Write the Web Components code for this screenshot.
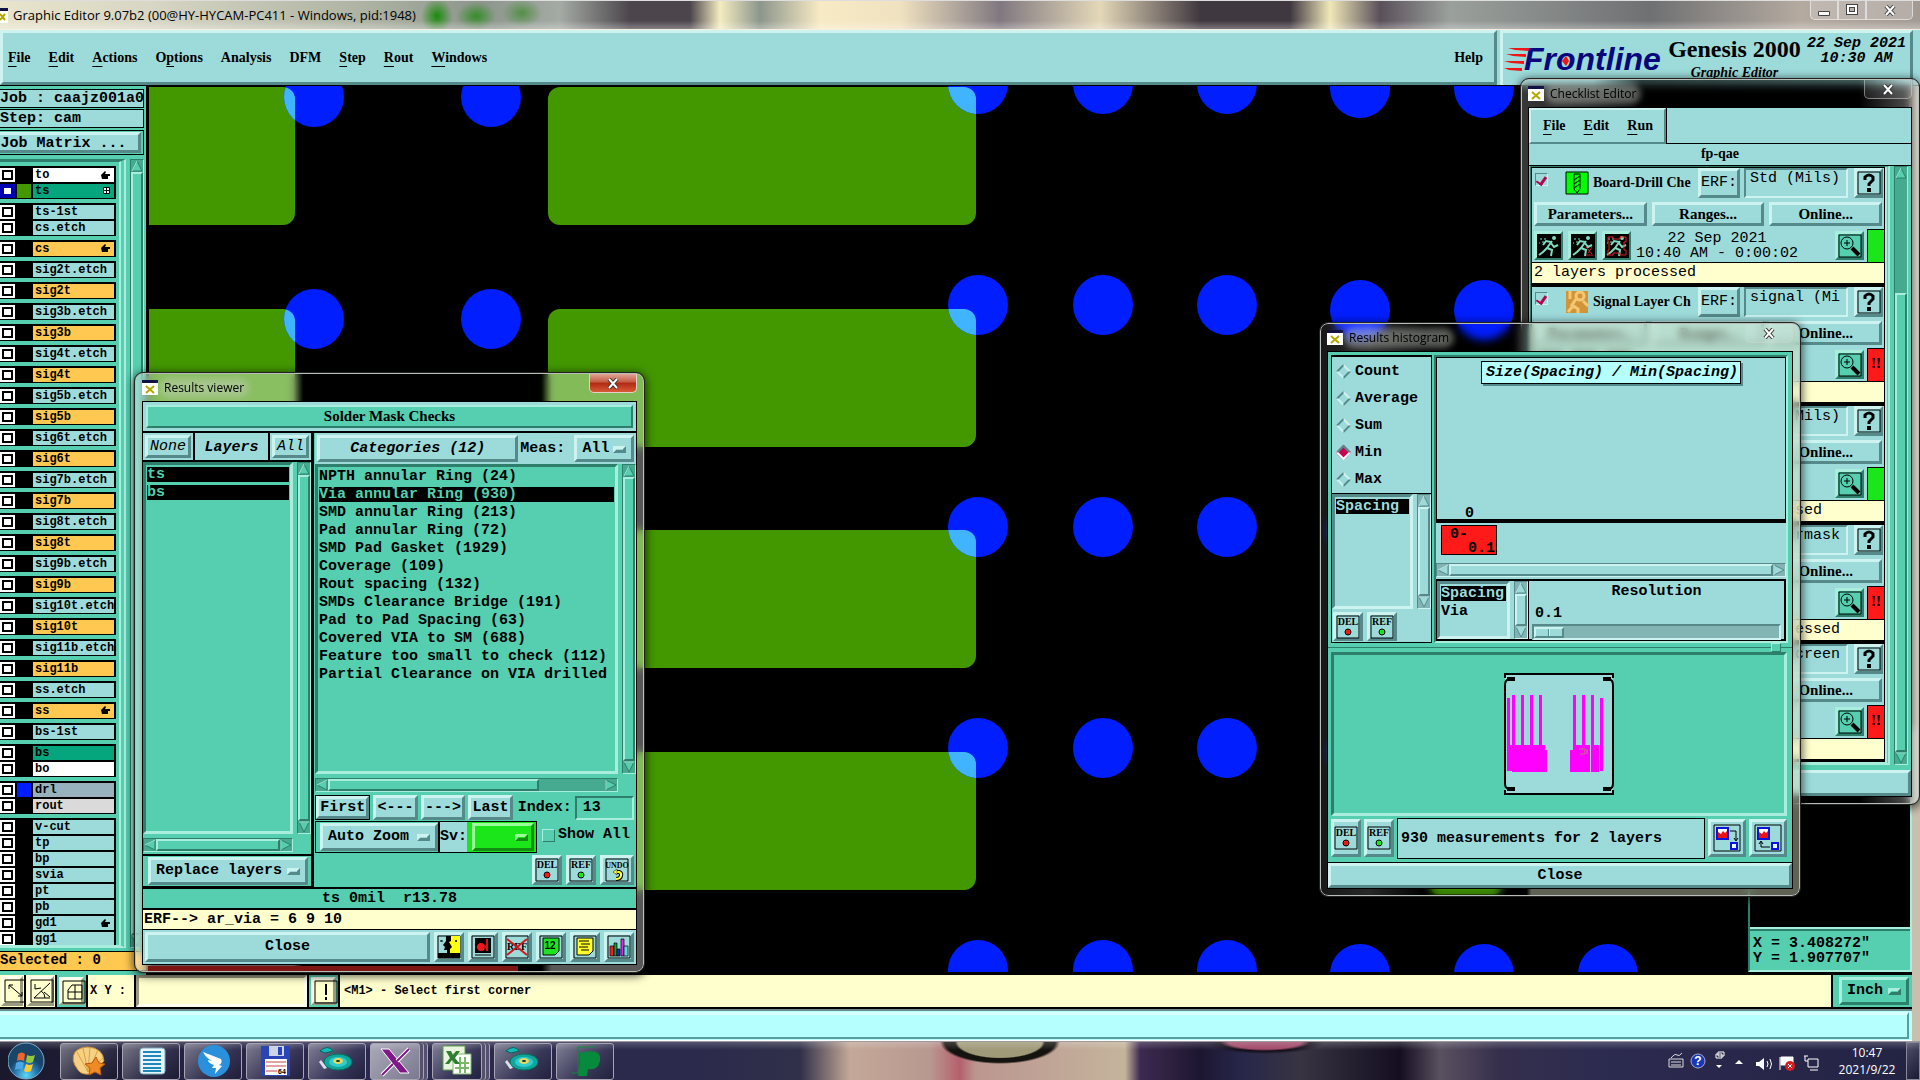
<!DOCTYPE html>
<html lang="en">
<head>
<meta charset="utf-8">
<title>Graphic Editor</title>
<style>
  html, body { margin: 0; height: 100%; }
  body {
    --light: #9ddbdb;
    --light-hi: #cdf3f1;
    --light-lo: #56898a;
    --green: #55cfb0;
    --green-hi: #a9eedd;
    --green-lo: #2d7f6b;
    --cream: #ffffce;
    --mono: "Liberation Mono", "DejaVu Sans Mono", monospace;
    --serif: "Liberation Serif", serif;
    --sans: "Open Sans", "Noto Sans", sans-serif;
    --face: var(--green);
    --hi: var(--green-hi);
    --lo: var(--green-lo);
    background: #000;
    color: #000;
    font: bold 15px/18px var(--mono);
    overflow: hidden;
  }
</style>
</head>
<body>
<genesis-desktop></genesis-desktop>

<script>
const base = `
  *, :host { box-sizing: border-box; }
  :host { display: block; }
  button, input, select { font: inherit; color: inherit; margin: 0; padding: 0; border-radius: 0; outline: none; }
  button { white-space: nowrap; }
  input { min-width: 0; }
  .lt { --face: var(--light); --hi: var(--light-hi); --lo: var(--light-lo); background: var(--light); }
  .raised { background: var(--face); border: 3px solid; border-color: var(--hi) var(--lo) var(--lo) var(--hi); }
  .sunken { background: var(--face); border: 3px solid; border-color: var(--lo) var(--hi) var(--hi) var(--lo); }
  .row { display: flex; }
  .col { display: flex; flex-direction: column; }
  .grow { flex: 1; min-width: 0; min-height: 0; }
`;

// registers an element whose shadow markup comes from render(element)
function define(name, css, render) {
  customElements.define(name, class extends HTMLElement {
    constructor() {
      super();
      this.attachShadow({ mode: 'open' });
    }

    connectedCallback() {
      const template = document.createElement('template');
      template.innerHTML = `<style>${base}${css}</style>${render(this)}`;
      this.shadowRoot.replaceChildren(template.content.cloneNode(true));
    }
  });
}

const man = '<rect width="24" height="24" fill="#000"/><g stroke="#7fdcc0" stroke-width="2" fill="none"><path d="M15 7l-5 7M10 14l5 2-1 6M10 14l-4 4-4 3M14 8l-5-1-3 4M14 9l3 4 4-2"/></g><circle cx="17" cy="4" r="2" fill="#7fdcc0"/><path d="M3 5h2M7 5h2M5 8h2M2 9h1" stroke="#7fdcc0" stroke-width="1"/>';
const frame = '<path d="M1 1h22v22H1z" fill="none" stroke="#000"/>';
const small = (label, extra) => `${frame}<text x="12" y="10" text-anchor="middle" style="font:bold 10px 'Liberation Serif',serif">${label}</text>${extra}`;

const icons = {
  del: small('DEL', '<circle cx="12" cy="17" r="3" fill="#f01818" stroke="#000"/>'),
  ref: small('REF', '<circle cx="12" cy="17" r="3" fill="#1ee41e" stroke="#000"/>'),
  undo: frame + '<text x="12" y="10" text-anchor="middle" style="font:bold 8px \'Liberation Serif\',serif">UNDO</text><path d="M10 14h4q3 1 2 4t-5 3" fill="none" stroke="#000" stroke-width="4"/><path d="M9 14h5q3 1 2 4t-5 3" fill="none" stroke="#ff3" stroke-width="2"/><path d="M12 11l-4 3 4 3z" fill="#ff3" stroke="#000" stroke-width=".5"/>',
  faces: '<path d="M1 1h22v22H1z" fill="#9ddbdb" stroke="#000"/><path d="M12 1h11v17H12z" fill="#ff1"/><path d="M9 1h5v5l-2 1 3 5-2 2v4h10v5H1v-5h9v-3H7l1-3-2-2 3-4z"/><path d="M4 6h2M18 6h2M4 5v2M19 5v2" stroke="#000"/>',
  screen: frame + '<rect x="4" y="3" width="16" height="15"/><circle cx="10" cy="12" r="4" fill="#f01818"/><path d="M16 4v12M12 12h4" stroke="#d01818" stroke-width="2"/><path d="M4 20h16" stroke="#000" stroke-width="1"/>',
  noref: frame + '<text x="12" y="15" text-anchor="middle" style="font:bold 10px \'Liberation Serif\',serif">REF</text><path d="M2 4l20 16M22 4L2 20" stroke="#d01818" stroke-width="2"/>',
  half: frame + '<path d="M4 3h16v13l-4 4H4z" fill="#1ee41e" stroke="#000"/><text x="11" y="14" text-anchor="middle" style="font:bold 10px \'Liberation Sans\',sans-serif">12</text>',
  note: frame + '<path d="M4 3h16v13l-4 4H4z" fill="#ffff2a" stroke="#000"/><path d="M6 6h10M8 9h9M6 12h9M8 15h8" stroke="#000"/>',
  bars: frame + '<g stroke="#000" stroke-width=".7"><path d="M3 11h4v10H3z" fill="#e22"/><path d="M7 8h3v13H7z" fill="#194"/><path d="M10 14h3v7h-3z" fill="#22c"/><path d="M14 4h3v17h-3z" fill="#e2e"/><path d="M17 11h4v10h-4z" fill="#5dd"/></g>',
  help: frame + '<path d="M8 9V6q4-4 8 0v3l-4 4v2" fill="none" stroke="#000" stroke-width="3"/><path d="M10 17h4v4h-4z"/>',
  zoom: frame + '<circle cx="9" cy="9" r="6" fill="none" stroke="#000"/><path d="M6 9h6M9 6v6" stroke="#000"/><path d="M14 14l7 7" stroke="#000" stroke-width="4"/>',
  run: man,
  runSel: man + '<path d="M15 13l6 7M21 13l-4 6M15 21h7" stroke="#c22" stroke-width="1"/>',
  runBox: man + '<path d="M3 3h5v2h7V3h6v5h-2v8h2v5h-6v-2H8v2H3v-5h1V8H3z" fill="none" stroke="#d22"/>',
  drill: '<path d="M1 1h22v22H1z" fill="#0f0" stroke="#000"/><path d="M9 3h6v15l-3 4-3-4zM9 9l6-4M9 13l6-4M9 17l6-4" fill="none" stroke="#000"/>',
  signal: '<rect x="1" y="1" width="22" height="22" fill="#d29438"/><circle cx="15" cy="6" r="4" fill="none" stroke="#f4c774" stroke-width="3"/><path d="M5 1v8M11 9l-4 6 6 4v4M3 22l4-5h4M18 11l5 5" fill="none" stroke="#f4c774" stroke-width="3"/>',
  line: frame + '<path d="M5 6l13 11M5 10V6h4M14 17h4v-4" fill="none" stroke="#000"/>',
  angle: frame + '<path d="M4 19L20 4M4 19h16M5 5v5l6-1M11 12q4 2 4 7M14 13l6 5" fill="none" stroke="#000"/>',
  grid: frame + '<path d="M6 10l4-5h10v14H6zM13 5v14M6 12h14" fill="none" stroke="#000"/>',
  alert: frame + '<path d="M12 4v11M12 17v3" stroke="#000" stroke-width="2"/>',
  stackOut: '<path d="M1 1h26v26H1z" fill="none" stroke="#000"/><path d="M4 4h11v11H4z" fill="#fff" stroke="#11d" stroke-width="2"/><path d="M5 8l3 2 2-3 2 2 2-2v7H5z" fill="#e11"/><path d="M18 19h6v6h-6z" fill="#dff" stroke="#11d" stroke-width="2"/><path d="M17 7h6v9M21 14l2 3 2-3" fill="none" stroke="#000"/>',
  stackIn: '<path d="M1 1h26v26H1z" fill="none" stroke="#000"/><path d="M4 4h11v11H4z" fill="#fff" stroke="#11d" stroke-width="2"/><path d="M5 8l3 2 2-3 2 2 2-2v7H5z" fill="#e11"/><path d="M18 19h6v6h-6z" fill="#dff" stroke="#11d" stroke-width="2"/><path d="M16 23H7v-5M5 20l2-3 2 3" fill="none" stroke="#000"/>'
};

// every icon is kept on a 24px grid, the stack icons on 28px
define('glyph-icon', 'svg { display: block; }', el => {
  const name = el.getAttribute('name');
  const size = name.startsWith('stack') ? 28 : 24;
  return `<svg width="${size}" height="${size}" viewBox="0 0 ${size} ${size}">${icons[name]}</svg>`;
});

define('icon-button', `
  button { width: 100%; height: 100%; display: grid; place-items: center; }
`, el => `<button type="button" class="raised" aria-label="${el.getAttribute('label')}"><glyph-icon name="${el.getAttribute('name')}"></glyph-icon></button>`);

define('motif-button', `
  button { width: 100%; height: 100%; overflow: hidden; }
`, () => '<button type="button" class="raised"><slot></slot></button>');

// drop-down with the small raised bar of a Motif option menu
define('option-menu', `
  :host { position: relative; }
  select { appearance: none; width: 100%; height: 100%; padding-left: 5px; }
  i { position: absolute; right: 8px; top: 50%; width: 13px; height: 7px; margin-top: -3px; border-width: 2px; pointer-events: none; }
`, el => `<select class="raised" aria-label="${el.getAttribute('label')}"><option>${el.getAttribute('value')}</option></select><i class="raised"></i>`);

define('scroll-bar', `
  :host { flex: none; display: flex; background: color-mix(in srgb, var(--face) 82%, #000); border: 1px solid; border-color: var(--lo) var(--hi) var(--hi) var(--lo); }
  :host([dir=v]) { flex-direction: column; width: 14px; }
  :host([dir=h]) { height: 14px; }
  .track { flex: 1; display: flex; flex-direction: inherit; }
  .thumb { border-width: 2px; }
  svg { flex: none; display: block; width: 12px; height: 12px; stroke: var(--lo); fill: var(--face); }
`, el => {
  const v = el.getAttribute('dir') === 'v';
  const start = Number(el.getAttribute('start') || 0);
  const size = Number(el.getAttribute('size') || 100);
  const a = v ? 'M6 1L11 11H1z' : 'M1 6L11 1v10z';
  const b = v ? 'M6 11L11 1H1z' : 'M11 6L1 1v10z';
  const hiA = v ? 'M6 1L1 11' : 'M1 6L11 1';
  const hiB = v ? 'M1 1h10' : 'M1 1v10';
  return `<svg><path d="${a}"/><path d="${hiA}" style="stroke:var(--hi)"/></svg>
    <div class="track"><div style="flex:${start}"></div><div class="thumb raised" style="flex:${size}"></div><div style="flex:${100 - start - size}"></div></div>
    <svg><path d="${b}"/><path d="${hiB}" style="stroke:var(--hi)"/></svg>`;
});

define('text-list', `
  :host { display: flex; gap: 4px; min-height: 0; }
  .box { flex: 1; min-width: 0; padding: 2px 1px; overflow: hidden; }
  ::slotted(div) { height: 15px; line-height: 15px; margin-bottom: 3px; white-space: pre; overflow: hidden; }
  ::slotted(div[selected]) { background: #000; color: var(--face); }
`, () => '<div class="box sunken"><slot></slot></div><scroll-bar dir="v"></scroll-bar>');

define('aero-window', `
  :host { position: absolute; display: flex; flex-direction: column; border: 1px solid #b8beb8; outline: 1px solid #222; border-radius: 8px; padding: 0 6px 6px; background: var(--glass, #0003); backdrop-filter: blur(4px); box-shadow: 0 2px 10px 2px #000a; }
  header { flex: none; height: 27px; display: flex; align-items: center; gap: 6px; font: 12px/16px var(--sans); }
  h2 { margin: 0; font: inherit; line-height: 10px; background: #c8d0c470; border-radius: 5px; box-shadow: 0 0 6px 5px #c8d0c470; }
  .x { align-self: flex-start; margin-left: auto; width: 48px; height: 19px; display: grid; place-items: center; background: #ffffff18; border: 1px solid #ccd4cc88; border-top: 0; border-radius: 0 0 5px 5px; }
  :host([active]) .x { background: linear-gradient(#e0a595, #c55a42 45%, #b02a10 50%, #d8593a); border-color: #e6cfc8; }
  .body { flex: 1; min-height: 0; border: 1px solid #000; background: var(--green); display: flex; flex-direction: column; }
`, el => `<header>
    <svg width="16" height="15"><path d="M0 0h16v15H0z" fill="#fff"/><path d="M0 0h16v3H0z" fill="#114"/><path d="M4 6l8 7M12 6l-8 7" stroke="#b5a800" stroke-width="2"/></svg>
    <h2>${el.getAttribute('heading')}</h2>
    <button class="x" type="button" aria-label="Close window"><svg width="12" height="11"><path d="M2 1l8 9M10 1L2 10" stroke="#333" stroke-width="4"/><path d="M2 1l8 9M10 1L2 10" stroke="#fff" stroke-width="2"/></svg></button>
  </header><div class="body"><slot></slot></div>`);

define('menu-items', `
  :host { display: flex; gap: 18px; font: bold 14px/18px var(--serif); }
  a { color: inherit; text-decoration: none; white-space: nowrap; }
  u { text-underline-offset: 4px; }
`, el => el.getAttribute('items').split(',').map(item => `<a href="#">${item.replace(/_(.)/, '<u>$1</u>')}</a>`).join(''));

// colour codes: n normal, o orange, w white, g green, d drill, r rout; the third entry is the mark
const layers = [
  [['to', 'w', 'h'], ['ts', 'g', 'a']],
  [['ts-1st'], ['cs.etch']],
  [['cs', 'o', 'h']],
  ...['2t', '3b', '4t', '5b', '6t', '7b', '8t', '9b', '10t', '11b'].flatMap(s => [[[`sig${s}.etch`]], [[`sig${s}`, 'o']]]),
  [['ss.etch']],
  [['ss', 'o', 'h']],
  [['bs-1st']],
  [['bs', 'g'], ['bo', 'w']],
  [['drl', 'd'], ['rout', 'r']],
  [['v-cut'], ['tp'], ['bp'], ['svia'], ['pt'], ['pb'], ['gd1', 'n', 'h'], ['gg1']]
];

define('layer-panel', `
  :host { display: flex; flex-direction: column; background: var(--green); border-right: 3px solid #000; padding-top: 3px; overflow: hidden; }
  .cell { height: 19px; margin-right: 2px; border: 1px solid #000; border-left: 0; line-height: 17px; white-space: pre; background: var(--light); }
  .cell + .cell { margin-top: 1px; }
  .matrix { height: 25px; margin: 2px 2px 4px 0; padding: 1px 2px 1px 0; border: 1px solid #000; border-left: 0; }
  .matrix motif-button { height: 21px; margin-left: -14px; }
  .lists { display: flex; padding-right: 2px; gap: 4px; }
  .rows { flex: 1; padding-top: 4px; overflow: hidden; border: solid var(--lo); border-width: 3px 0 0; border-right: 7px double var(--hi); border-bottom: 3px solid var(--hi); font: bold 12px/14px var(--mono); }
  .group { background: #000; width: 116px; margin-bottom: 4px; padding: 1px 0; }
  .layer { height: 16px; display: flex; align-items: center; gap: 2px; }
  .layer:last-child { height: 15px; }
  input { appearance: none; flex: none; width: 15px; height: 14px; background: #fff; display: grid; place-items: center; }
  input::after { content: ""; box-sizing: border-box; width: 11px; height: 10px; border: 2px solid #000; background: #fff; }
  input:checked { background: #0000b4; }
  input:checked::after { border-color: #0000b4; }
  .swatch { width: 14px; height: 14px; }
  label { width: 81px; height: 14px; padding: 0 4px 0 2px; display: flex; justify-content: space-between; align-items: center; background: var(--light); }
  .o { background: #ffc850; } .w { background: #fff; } .g { background: #05a57d; } .d { background: #98b2bd; } .r { background: #dadada; }
  .selected { height: 20px; margin: 3px 0 4px; border: solid #000; border-width: 1px 0; background: #ffc850; font: bold 14px/17px var(--mono); }
`, () => `
  <div class="cell">Job : caajz001a0</div>
  <div class="cell">Step: cam</div>
  <div class="matrix"><motif-button class="lt">Job Matrix ...</motif-button></div>
  <div class="lists grow">
    <div class="rows">${layers.map(group => `<div class="group">${group.map(([name, kind = 'n', mark]) => `
      <div class="layer"><input type="checkbox" id="l-${name}" ${mark === 'a' ? 'checked' : ''}>
      <span class="swatch" style="background:${mark === 'a' ? '#439800' : kind === 'd' ? '#001eff' : '#000'}"></span>
      <label for="l-${name}" class="${kind}">${name}${mark === 'h' ? '<svg width="9" height="9"><path d="M0 4l4-4 1 1-1 2h5v2H7v3H1z"/></svg>' : mark ? '<svg width="7" height="7"><path d="M.5.5h6v6h-6zM3.5 0v7M0 3.5h7" fill="#fff" stroke="#000"/></svg>' : ''}</label></div>`).join('')}</div>`).join('')}
    </div>
    <scroll-bar dir="v"></scroll-bar>
  </div>
  <div class="selected">Selected : 0</div>`);

// pads and solder mask openings, in screen pixels from the window corner
define('board-canvas', `
  :host { position: relative; background: #000; overflow: hidden; border-bottom: 3px solid #000; }
  svg { display: block; width: 100%; height: 100%; }
  .corner { position: absolute; right: 0; bottom: 0; width: 164px; border: 2px solid; border-color: #000 var(--green-hi) var(--green-hi) var(--green-lo); }
  .view { height: 200px; border-bottom: 2px solid var(--green-hi); }
  .xy { background: var(--green); border-top: 2px solid var(--green-lo); padding: 5px 3px 4px; font: bold 15px/15px var(--mono); white-space: pre; }
`, () => {
  const pads = [[1608, 974]];
  [97, 319, 540, 762].forEach(y => [314, 491].forEach(x => pads.push([x, y])));
  [84, 305, 527, 748, 970].forEach(y => [978, 1103, 1227].forEach(x => pads.push([x, y])));
  [88, 310, 531, 753, 974].forEach(y => [1360, 1484].forEach(x => pads.push([x, y])));
  const circles = pads.map(([x, y]) => `<circle cx="${x}" cy="${y}" r="30"/>`).join('');
  const bars = [87, 309, 530, 752].map(y => `<rect x="120" y="${y}" width="175" height="138" rx="12"/><rect x="548" y="${y}" width="428" height="138" rx="12"/>`).join('');
  return `<svg><defs><clipPath id="mask">${bars}</clipPath></defs><g transform="translate(-149 -86)">
      <g fill="#439800">${bars}</g><g fill="#001eff">${circles}</g><g fill="#40b4ff" clip-path="url(#mask)">${circles}</g>
      <rect x="1430" y="870" width="72" height="24" rx="8" fill="#439800"/>
    </g></svg>
    <div class="corner"><div class="view"></div><div class="xy">X = 3.408272"
Y = 1.907707"</div></div>`;
});

define('results-viewer', `
  aero-window { left: 135px; top: 373px; width: 509px; height: 599px; --glass: linear-gradient(#7d1612, #7d1612) 12px 100% / 370px 5px no-repeat, linear-gradient(90deg, #ffffff60 0, #ffffff60 31%, #0000 33%, #0000 80%, #ffffff58 82%); }
  .head { height: 29px; border: 3px solid var(--light); box-shadow: 0 2px #000; margin-bottom: 2px; text-align: center; font: bold 15px/18px var(--serif); }
  .head div { height: 23px; border-width: 2px; }
  .panes { display: flex; }
  .left { width: 171px; border-right: 3px solid #000; }
  .tabs { height: 29px; display: flex; border-bottom: 2px solid #000; }
  .tabs > * { padding: 2px; }
  .tabs b { flex: 1; background: var(--light); border: solid #000; border-width: 0 2px; text-align: center; line-height: 25px; font-style: italic; }
  .tabs i { font-weight: normal; }
  motif-button, option-menu, icon-button { height: 100%; }
  .right { padding-left: 1px; }
  .cat { height: 31px; display: flex; align-items: center; background: var(--light); white-space: pre; }
  .nav { display: flex; gap: 3px; height: 26px; align-items: center; padding: 1px 2px 0 0; }
  .nav motif-button { width: 45px; }
  .nav .first { width: 56px; border: 1px solid #000; }
  .nav label { margin-left: 2px; }
  .nav input { width: 60px; height: 24px; margin-left: auto; padding-left: 6px; border-width: 2px; }
  .opts { display: flex; height: 34px; align-items: center; padding: 1px 0; white-space: nowrap; }
  .opts .box { height: 32px; border: 1px solid #000; display: flex; align-items: center; }
  .zoom { width: 118px; height: 28px; margin-left: 4px; }
  .opts .sv { --face: #1ae61a; --hi: #9f9; --lo: #128c12; background: #1ae61a; height: 30px; padding: 1px 2px 1px 5px; width: 69px; }
  .opts label { display: flex; align-items: center; gap: 3px; margin-left: 5px; padding-bottom: 4px; }
  .opts label input { appearance: none; width: 13px; height: 13px; border-width: 1px; }
  .icons { display: flex; gap: 4px; height: 33px; justify-content: flex-end; padding: 1px 2px 2px; }
  .icons icon-button { width: 30px; }
  .icons .wide { width: 34px; }
  .line { height: 21px; border-top: 2px solid #000; text-align: center; white-space: pre; line-height: 19px; }
  .erf { background: var(--cream); text-align: left; padding-left: 1px; }
  .foot { height: 35px; display: flex; gap: 4px; padding: 2px; border-top: 1px solid #000; }
  .foot icon-button { width: 30px; }
`, () => `<aero-window heading="Results viewer" active>
    <div class="head"><div class="raised">Solder Mask Checks</div></div>
    <div class="panes grow">
      <div class="left col">
        <div class="tabs"><motif-button class="lt" style="width:50px"><i>None</i></motif-button><b>Layers</b><motif-button class="lt" style="width:41px"><i>All</i></motif-button></div>
        <text-list class="grow"><div selected>ts</div><div selected>bs</div></text-list>
        <div style="padding:4px 18px 2px 0"><scroll-bar dir="h"></scroll-bar></div>
        <div style="height:33px;border-top:2px solid #000;border-bottom:1px solid #000;padding:1px 3px 1px 5px"><option-menu class="lt" label="Layer mode" value="Replace layers"></option-menu></div>
      </div>
      <div class="right col grow">
        <div class="cat"><motif-button class="lt" style="width:210px;padding:2px"><i>Categories (12)</i></motif-button><label>Meas: </label><option-menu class="lt" label="Meas" value="All" style="width:61px;margin:0 2px 0 auto;padding:2px 0"></option-menu></div>
        <text-list class="grow"><div>NPTH annular Ring (24)</div><div selected>Via annular Ring (930)</div><div>SMD annular Ring (213)</div><div>Pad annular Ring (72)</div><div>SMD Pad Gasket (1929)</div><div>Coverage (109)</div><div>Rout spacing (132)</div><div>SMDs Clearance Bridge (191)</div><div>Pad to Pad Spacing (63)</div><div>Covered VIA to SM (688)</div><div>Feature too small to check (112)</div><div>Partial Clearance on VIA drilled</div></text-list>
        <div style="padding:4px 18px 2px 0"><scroll-bar dir="h" size="76"></scroll-bar></div>
        <div class="nav"><motif-button class="lt first">First</motif-button><motif-button class="lt">&lt;---</motif-button><motif-button class="lt">---&gt;</motif-button><motif-button class="lt">Last</motif-button><label for="index">Index:</label><input id="index" class="sunken" value="13"></div>
        <div class="opts"><div class="box"><option-menu class="lt zoom" label="Zoom mode" value="Auto Zoom"></option-menu></div><div class="box"><span class="lt" style="line-height:30px">Sv:</span><option-menu class="sv" label="Severity" value=""></option-menu></div><label><input type="checkbox" class="raised">Show All</label></div>
        <div class="icons"><icon-button class="lt" name="del" label="Delete"></icon-button><icon-button class="lt" name="ref" label="Reference"></icon-button><icon-button class="lt wide" name="undo" label="Undo"></icon-button></div>
      </div>
    </div>
    <div class="line">ts 0mil  r13.78</div>
    <div class="line erf">ERF--&gt; ar_via = 6 9 10</div>
    <div class="foot lt"><motif-button class="grow">Close</motif-button>${['faces', 'screen', 'noref', 'half', 'note', 'bars'].map(n => `<icon-button name="${n}" label="${n}"></icon-button>`).join('')}</div>
  </aero-window>`);

define('checklist-item', `
  :host { --face: var(--light); --hi: var(--light-hi); --lo: var(--light-lo); background: var(--light); height: 119px; border: 1px solid #000; border-bottom-width: 3px; }
  .top { display: flex; height: 31px; padding: 0 1px 1px 3px; align-items: center; gap: 4px; }
  .tick { appearance: none; flex: none; width: 13px; height: 13px; align-self: flex-start; margin: 5px 13px 0 0; border-width: 1px; }
  .tick:checked { display: grid; place-items: center; }
  .tick:checked::after { content: ""; width: 4px; height: 8px; border: solid #b8004c; border-width: 0 3px 2px 0; transform: rotate(35deg); }
  .name { width: 101px; overflow: hidden; white-space: nowrap; font: bold 14px/20px var(--serif); }
  .erf { width: 42px; height: 30px; font-weight: normal; }
  .top input[type=text] { width: 104px; height: 30px; padding: 0 0 9px 4px; border-width: 2px; font-weight: normal; }
  .top icon-button { width: 29px; height: 30px; margin-left: auto; }
  .mid { display: flex; gap: 5px; height: 24px; margin: 3px 2px; font: bold 15px/18px var(--serif); }
  .mid motif-button { flex: 1; }
  .bot { display: flex; height: 33px; gap: 5px; align-items: center; padding-left: 2px; }
  .bot icon-button { width: 29px; height: 29px; --face: var(--green); --hi: var(--green-hi); --lo: var(--green-lo); }
  .date { width: 162px; margin-right: auto; text-align: center; font: 15px/15px var(--mono); white-space: pre; }
  .state { width: 17px; height: 33px; margin-left: -2px; border: 1px solid #000; border-width: 1px 0 0 1px; font: bold 15px/28px var(--serif); text-align: center; }
  .msg { height: 21px; border-top: 1px solid #000; background: var(--cream); font-weight: normal; padding-left: 2px; white-space: pre; line-height: 19px; }
`, el => {
  const a = name => el.getAttribute(name) || '';
  return `<div class="top"><input type="checkbox" class="tick sunken" checked aria-label="Enabled">
      ${a('icon') ? `<glyph-icon name="${a('icon')}"></glyph-icon>` : '<span style="width:24px"></span>'}
      <div class="name">${a('name')}</div><motif-button class="erf">ERF:</motif-button>
      <input type="text" class="sunken" aria-label="ERF model" value="${a('erf')}"><icon-button name="help" label="Help"></icon-button></div>
    <div class="mid"><motif-button>Parameters...</motif-button><motif-button>Ranges...</motif-button><motif-button>Online...</motif-button></div>
    <div class="bot"><icon-button name="run" label="Run"></icon-button><icon-button name="runSel" label="Run selected"></icon-button><icon-button name="runBox" label="Run in profile"></icon-button>
      <div class="date">${a('date')}</div><icon-button name="zoom" label="Show results"></icon-button>
      <div class="state" style="background:${a('state') === 'ok' ? '#1ae61a' : '#ff1a1a'}">${a('state') === 'ok' ? '' : '!!'}</div></div>
    <div class="msg">${a('msg')}</div>`;
});

define('checklist-editor', `
  aero-window { left: 1521px; top: 79px; width: 398px; height: 725px; --glass: linear-gradient(90deg, #ffffff38 0, #ffffff20 18%, #000a 30%, #0008 85%, #ffffff50 98%); }
  .menu { height: 36px; border-bottom: 1px solid #000; }
  .menu .raised { width: 137px; height: 36px; padding: 7px 12px; border-width: 2px; outline: 1px solid #000; }
  .title { height: 22px; border-bottom: 1px solid #000; text-align: center; font: bold 14px/20px var(--serif); }
  .list { display: flex; gap: 4px; padding: 0 3px 5px 1px; }
  .frame { border: solid; border-width: 1px 5px 3px 1px; border-color: var(--lo) var(--hi) var(--hi) var(--lo); border-right-style: double; overflow: hidden; }
  .foot { height: 26px; }
`, () => `<aero-window heading="Checklist Editor">
    <div class="menu lt"><div class="raised"><menu-items items="_File,_Edit,_Run"></menu-items></div></div>
    <div class="title lt">fp-qae</div>
    <div class="list grow"><div class="frame grow">
      <checklist-item icon="drill" name="Board-Drill Che" erf="Std (Mils)" date="22 Sep 2021
10:40 AM - 0:00:02" state="ok" msg="2 layers processed"></checklist-item>
      <checklist-item icon="signal" name="Signal Layer Ch" erf="signal (Mi"></checklist-item>
      <checklist-item erf="p&g (Mils)" state="ok" msg="2 layers processed 0 unprocessed"></checklist-item>
      <checklist-item erf="soldermask" msg="2 layers processed, 10 unprocessed"></checklist-item>
      <checklist-item erf="silkscreen"></checklist-item>
    </div><scroll-bar dir="v" start="20" size="80"></scroll-bar></div>
    <motif-button class="foot lt"></motif-button>
  </aero-window>`);

define('results-histogram', `
  aero-window { left: 1320px; top: 323px; width: 480px; height: 573px; --glass: linear-gradient(90deg, #ffffff18 0, #ffffff28 10%, #0000 22%, #0000 43%, #d8e0c070 44%); }
  .upper { display: flex; gap: 2px; height: 291px; padding: 3px 4px 0 3px; }
  .side { width: 101px; border: 1px solid #000; border-top-width: 2px; }
  .modes { height: 137px; border: 0; border-bottom: 1px solid #000; margin: 0; padding: 1px 4px 0; }
  .modes label { display: flex; height: 27px; align-items: center; gap: 4px; }
  .modes input { appearance: none; width: 11px; height: 11px; margin: 0 2px; transform: rotate(45deg); border-width: 2px; border-color: var(--hi) var(--lo); background: var(--light); }
  .modes input:checked { background: #cc0050; border-color: var(--lo) #fff #fff var(--lo); }
  .tools { display: flex; gap: 4px; height: 33px; padding: 3px 1px 1px; }
  .tools icon-button { width: 30px; }
  .plot { border: solid; border-width: 2px; border-color: var(--green-lo) var(--green-hi) var(--green-hi) var(--green-lo); }
  .chart { height: 166px; border: 1px solid #000; border-bottom-width: 4px; display: flex; flex-direction: column; align-items: center; padding-top: 3px; }
  .chart h3 { margin: 0; padding: 0 2px 0 4px; font: italic bold 15px/21px var(--mono); background: #b5ffff; border: 1px solid #000; box-shadow: 2px 2px #56898a; }
  .zero { margin: auto auto 0 28px; line-height: 10px; }
  .bin { width: 56px; height: 30px; margin: 2px 0 8px 5px; border: 1px solid #000; background: #ff1a1a; font: bold 15px/14px var(--mono); white-space: pre; padding: 2px 0 0 8px; }
  .low { display: flex; border: solid #000; border-width: 2px 2px 2px 1px; margin-top: 2px; }
  .low text-list { width: 92px; border-right: 1px solid #000; }
  .res { padding: 2px 3px; text-align: center; }
  .res output { display: block; text-align: left; padding: 4px 3px 1px; height: 23px; }
  .res input { appearance: none; display: block; width: 100%; height: 16px; background: #84b5b5; border-width: 2px; }
  .res input::-webkit-slider-thumb { appearance: none; width: 30px; height: 11px; border: 2px solid; border-color: var(--hi) var(--lo) var(--lo) var(--hi); background: linear-gradient(90deg, var(--light) 45%, var(--light-lo) 45%, var(--light-lo) 50%, var(--light-hi) 50%, var(--light-hi) 55%, var(--light) 55%); }
  .sash { height: 9px; padding-right: 11px; display: flex; justify-content: flex-end; background: linear-gradient(var(--green) 4px, var(--green-lo) 4px, var(--green-lo) 5px, var(--green) 5px); }
  .sash i { width: 10px; height: 9px; border-width: 1px; }
  .map { margin: 0 5px 0 3px; display: grid; place-items: center; }
  .info { display: flex; gap: 3px; height: 46px; padding: 2px 5px 3px 3px; }
  .info icon-button { width: 30px; height: 38px; margin-top: 1px; }
  .info icon-button.big { width: 38px; }
  .info p { margin: 0; padding-left: 3px; border: 1px solid #000; line-height: 39px; height: 41px; }
  .foot { height: 26px; border-top: 1px solid #000; }
`, () => `<aero-window heading="Results histogram">
    <div class="upper">
      <div class="side lt col">
        <fieldset class="modes">${['Count', 'Average', 'Sum', 'Min', 'Max'].map(m => `<label><input type="radio" name="mode" class="raised" ${m === 'Min' ? 'checked' : ''}>${m}</label>`).join('')}</fieldset>
        <text-list class="grow"><div selected>Spacing</div></text-list>
        <div class="tools"><icon-button name="del" label="Delete"></icon-button><icon-button name="ref" label="Reference"></icon-button></div>
      </div>
      <div class="plot lt grow col">
        <div class="chart"><h3>Size(Spacing) / Min(Spacing)</h3><div class="zero">0</div></div>
        <div class="bin">0-
  0.1</div>
        <scroll-bar dir="h"></scroll-bar>
        <div class="low grow"><text-list><div selected>Spacing</div><div>Via</div></text-list>
          <div class="res grow"><label for="resolution">Resolution</label><output>0.1</output><input id="resolution" type="range" class="sunken" value="0"></div></div>
      </div>
    </div>
    <div class="sash"><i class="raised"></i></div>
    <div class="map sunken grow">
      <svg width="110" height="122"><path d="M1 1h108v120H1z" fill="#9ddbdb"/><path d="M1 5V1h108v4M1 117v4h108v-4M10 6H5Q1 7 1 12v98q0 6 4 6h5M100 6h5q4 1 4 6v98q0 6-4 6h-5" fill="none" stroke="#000" stroke-width="2"/><path d="M3 4h8v4H3zM99 4h8v4h-8zM3 114h8v4H3zM99 114h8v4h-8z"/>
      <path d="M3 25h3v47H3zM8 22h3v50H8zM17 22h3v50h-3zM26 22h3v50h-3zM35 22h3v50h-3zM69 22h3v50h-3zM78 22h3v50h-3zM87 22h3v77h-3zM96 25h3v73h-3zM3 72h38v5h2v22H8v-1H3zM66 77h3v-5h17v27H66zM87 72h8v27h-8z" fill="#f0f"/><path d="M75 76h6v5h-5M83 76v5" fill="none" stroke="#b87a7a"/></svg>
    </div>
    <div class="info"><icon-button class="lt" name="del" label="Delete"></icon-button><icon-button class="lt" name="ref" label="Reference"></icon-button><p class="lt grow">930 measurements for 2 layers</p><icon-button class="lt big" name="stackOut" label="Push"></icon-button><icon-button class="lt big" name="stackIn" label="Pop"></icon-button></div>
    <div class="foot lt"><motif-button style="height:100%">Close</motif-button></div>
  </aero-window>`);

define('title-bar', `
  :host { display: flex; height: 30px; align-items: center; font: 13px/16px var(--sans); border-top: 1px solid #ddd; border-bottom: 1px solid #f5efe0;
    background: linear-gradient(#0000 70%, #ffffff50), radial-gradient(16px 18px at 437px 15px, #1a8a0a, #1a8a0a00), radial-gradient(20px 14px at 476px 15px, #1a8a0ac0, #1a8a0a00), radial-gradient(20px 14px at 522px 12px, #3a8a2ac0, #3a8a2a00),
    linear-gradient(90deg, #e8e4cc 0, #d8d6c4 150px, #aab0a0 380px, #8c958c 480px, #a4aaa4 560px, #4c464c 630px, #4c464c 690px, #f4ecc0 720px, #8c968c 760px, #f8eac4 820px, #f0e2c0 900px, #807880 1000px, #e4d8b8 1100px, #403840 1200px, #403840 1290px, #f0e8b8 1330px, #5a505a 1380px, #9aa09c 1450px, #6f7072 1650px, #b4aaa0 1800px, #a39a93); }
  h1 { margin: 0 auto 0 5px; font: inherit; white-space: nowrap; }
  .ctl { align-self: flex-start; display: flex; height: 19px; margin-right: 7px; }
  .ctl button { width: 28px; display: grid; place-items: center; background: #ffffff30; border: 1px solid #fff8; border-top: 0; }
  .ctl button:last-child { width: 47px; border-radius: 0 0 5px 0; }
  .ctl button:first-child { border-radius: 0 0 0 5px; }
`, () => `<svg width="8" height="15"><path d="M0 0h8v15H0z" fill="#fff"/><path d="M0 0h8v3H0z" fill="#114"/><path d="M0 12l5-6M0 6l5 6" stroke="#b5a800" stroke-width="2"/></svg>
  <h1>Graphic Editor 9.07b2 (00@HY-HYCAM-PC411 - Windows, pid:1948)</h1>
  <div class="ctl"><button type="button" aria-label="Minimize"><svg width="12" height="12"><path d="M.5 7.500h11v4H.5z" fill="#fff" stroke="#444"/></svg></button>
  <button type="button" aria-label="Maximize"><svg width="12" height="12"><path d="M2 2h8v7H2z" fill="none" stroke="#444" stroke-width="4"/><path d="M2 2h8v7H2z" fill="none" stroke="#fff" stroke-width="2"/></svg></button>
  <button type="button" aria-label="Close"><svg width="12" height="11"><path d="M2 1l8 9M10 1L2 10" stroke="#444" stroke-width="4"/><path d="M2 1l8 9M10 1L2 10" stroke="#fff" stroke-width="2"/></svg></button></div>`);

define('app-header', `
  :host { display: flex; height: 56px; padding-right: 7px; background: var(--light); border-bottom: 1px solid #000; }
  nav { flex: 1; display: flex; align-items: center; justify-content: space-between; padding: 0 11px 0 5px; }
  .brand { width: 413px; margin-left: 3px; display: flex; padding-left: 1px; border-bottom: 0; }
  .brand svg { flex: none; margin-top: 9px; }
  .name { width: 137px; text-align: center; font: italic bold 14px/16px var(--serif); }
  .name b { display: block; font: bold 24px/32px var(--serif); }
  .date { margin-left: 4px; padding-top: 3px; text-align: center; font: italic bold 15px/15px var(--mono); white-space: pre; }
`, () => `<nav class="raised lt"><menu-items items="_File,_Edit,_Actions,O_ptions,Analysis,DFM,_Step,_Rout,_Windows"></menu-items><menu-items items="Help"></menu-items></nav>
  <div class="brand raised lt">
    <svg width="162" height="38"><path d="M4 6h21v3L11 8zM2 12h20v3L9 14zM0 19h20v3L7 21zM0 26h18v3L5 28z" fill="#f21414"/>
    <text x="20" y="28" fill="#08087c" style="font:italic bold 32px 'Liberation Sans',sans-serif">Frontline</text><path d="M62 14l3 5-3 5-4-5z" fill="#f21414"/></svg>
    <div class="name"><b>Genesis 2000</b>Graphic Editor</div>
    <div class="date">22 Sep 2021
10:30 AM</div>
  </div>`);

define('status-strip', `
  :host { border-right: 8px solid #c9bfae; background: #000; }
  .bar { display: flex; gap: 2px; height: 32px; }
  .bar > * { --face: var(--cream); --hi: #fffff0; --lo: #9a9a80; background: var(--cream); }
  icon-button { width: 29px; padding: 1px; }
  icon-button.g { background: var(--green); padding: 2px; }
  label { width: 46px; padding-left: 2px; line-height: 32px; white-space: pre; font-size: 12px; }
  input { width: 171px; padding-left: 5px; }
  p { margin: 0; padding-left: 4px; font: bold 12px/32px var(--mono); }
  .bar .unit { width: 79px; padding: 2px 3px 2px 6px; --face: var(--green); --hi: var(--green-hi); --lo: var(--green-lo); background: var(--green); }
  .unit option-menu { height: 28px; }
  .cyan { height: 32px; margin-top: 2px; border-top: 2px solid #6c8c8c; border-bottom: 1px solid #fff; padding: 1px 3px 2px 0; background: #b5ffff; }
  .cyan div { height: 27px; border: solid; border-width: 3px 2px 2px 0; border-color: #d8ffff #5b9c9c #5b9c9c; }
`, () => `<div class="bar"><icon-button style="width:24px" name="line" label="Line"></icon-button><icon-button name="angle" label="Angle"></icon-button><icon-button class="g" name="grid" label="Grid"></icon-button>
    <label for="xy">X Y :</label><input id="xy" class="sunken"><icon-button class="g" name="alert" label="Alerts"></icon-button>
    <p class="grow">&lt;M1&gt; - Select first corner</p><div class="unit"><option-menu label="Units" value="Inch"></option-menu></div></div>
  <div class="cyan"><div></div></div>`);

const cd = '<ellipse cx="20" cy="18" rx="14" ry="8" fill="#11a5a0" stroke="#075" /><ellipse cx="20" cy="18" rx="9" ry="5" fill="#3cc" /><ellipse cx="20" cy="17" rx="5" ry="3" fill="#e8d860"/><ellipse cx="20" cy="17" rx="2" ry="1" fill="#033"/><path d="M2 7q8-7 13 0l-8 2z" fill="#1bb" stroke="#065"/><path d="M3 16l6 8-3 1-5-7z" fill="#dde"/>';
const apps = [
  '<path d="M18 3Q33 4 34 17L20 30q-9 1-12-4Q0 16 5 8q5-5 13-5z" fill="#f6d184" stroke="#c88c30"/><path d="M18 28L7 8M18 28L13 4M18 28L20 3M18 28L28 6M18 28L33 14" stroke="#d9a044"/><path d="M26 13l3 6 6 1-5 4 1 7-6-3-6 3 1-7-5-4 7-1z" fill="#f08a24" stroke="#b55a10"/>',
  '<rect x="8" y="4" width="25" height="26" rx="3" fill="#e8f6fb" stroke="#7ab"/><path d="M11 8h18M11 12h18M11 16h18M11 20h18M11 24h18M11 27h18" stroke="#1e88b8" stroke-width="2"/>',
  '<circle cx="20" cy="17" r="16" fill="#2a90dc"/><path d="M9 8l18 7q2 4-2 6l3 1-7 8 1-6h-4l2-3q-6-2-6-5l4 1q-6-3-9-9z" fill="#fff"/>',
  '<path d="M5 2h29v30H7l-2-2z" fill="#2a44b8"/><path d="M13 2h15v10H13z" fill="#ccd4e8"/><path d="M22 3h4v8h-4z" fill="#2a44b8"/><path d="M9 15h22v16H9z" fill="#fff"/><path d="M10 18h20M10 22h20M10 27h11" stroke="#c44"/><text x="22" y="30" style="font:bold 7px \'Liberation Sans\',sans-serif">64</text>',
  cd,
  '<path d="M5 5h8l20 24h-9z" fill="#80188a" stroke="#fff"/><path d="M33 5L21 17M17 20L6 31" stroke="#fff" stroke-width="4"/><path d="M33 5L21 17M17 20L6 31" stroke="#80188a" stroke-width="2"/>',
  '<path d="M5 2h22v24H5z" fill="#e9f4de" stroke="#5a9e4a"/><path d="M15 10h18v20H15z" fill="#fff" stroke="#7ab86a"/><path d="M17 19h14M17 24h14M22 13v16M27 13v16" stroke="#7ab86a" stroke-width="2"/><path d="M8 7h5l2 4 3-4h4l-5 7 5 6h-5l-3-4-3 4H7l5-6z" fill="#2f7d32"/>',
  cd,
  '<path d="M12 3h18M12 3v26H6" fill="none" stroke="#0a8a3c"/><path d="M14 9q22-6 20 8-2 10-12 8l-1 7h-9l2-16z" fill="#078a3c"/>'
];

define('task-bar', `
  :host { display: flex; align-items: center; height: 39px; padding-left: 8px; border-top: 1px solid #9a9aa4; font: 12px/17px var(--sans); color: #fff;
    background: linear-gradient(#fff3, #fff0 8px), radial-gradient(60px 22px at 1000px 0, #a09a78 70%, #15130f 75%, #15130f 92%, #0000), radial-gradient(60px 12px at 1265px 0, #a04868 60%, #120d18 75%, #120d1800),
    linear-gradient(90deg, #19182c 0, #2a284e 300px, #2b2a4c 700px, #30304a 800px, #c4a898 850px, #b89890 930px, #b4606c 960px, #bb9690 975px, #c4b49c 1125px, #3e2a50 1140px, #1d1630 1200px, #26264a 1240px, #383442 1300px, #140e20 1400px, #5a5060 1440px, #352f4c 1500px, #2c2b50 1600px, #232344); }
  .apps { display: flex; gap: 4px; margin: 0 auto 0 15px; }
  .apps button { width: 58px; height: 37px; display: grid; place-items: center; border: 1px solid #a8a4b4; border-radius: 3px; background: linear-gradient(135deg, #fff6, #fff1 60%, #0003); }
  .apps .on { background: linear-gradient(135deg, #fff9, #ffffff60); }
  .apps .stack { width: 50px; margin-right: 8px; box-shadow: 3px 0 #55506c, 4px 0 #a8a4b4, 7px 0 #55506c, 8px 0 #a8a4b4; }
  .clock { width: 78px; text-align: center; }
  .desk { width: 14px; height: 38px; border: 1px solid #889; background: linear-gradient(135deg, #fff3, #0004); }
`, () => `<svg width="37" height="38"><defs><radialGradient id="orb" cx=".5" cy=".9"><stop offset="0" stop-color="#5fd8f8"/><stop offset=".6" stop-color="#2878b0"/><stop offset="1" stop-color="#1a4468"/></radialGradient></defs><circle cx="18" cy="19" r="18" fill="url(#orb)" stroke="#7ab0cc"/><path d="M10 12q4-3 7 0l-1 7q-4-2-7 0z" fill="#f0642c"/><path d="M19 13q4 2 8 0l-2 7q-4 2-7 0z" fill="#94c83c"/><path d="M8 21q4-3 8 0l-2 7q-4-2-7 0z" fill="#4aa8e8"/><path d="M18 22q4 2 7 0l-2 7q-4 2-7 0z" fill="#fccc30"/></svg>
  <div class="apps">${apps.map((a, i) => `<button type="button" aria-label="App ${i + 1}" class="${i === 5 ? 'on stack' : i === 6 ? 'stack' : ''}"><svg width="38" height="34">${a}</svg></button>`).join('')}</div>
  <svg width="160" height="24"><g fill="none" stroke="#ddd"><path d="M1 10h14v8H1zM3 13h10M3 16h10M3 9q4-5 6-3t5-2"/><path d="M50 3h6v4h-6zM48 5h6v4h-6z" stroke="#fff"/></g><circle cx="30" cy="12" r="7" fill="#1838b8" stroke="#aac"/><text x="30" y="16" text-anchor="middle" fill="#fff" style="font:bold 12px 'Liberation Sans',sans-serif">?</text>
    <path d="M48 16h6l-3 3zM67 15h8l-4-4zM88 13h3l5-4v12l-5-4h-3z" fill="#fff"/><path d="M99 12q2 3 0 6M102 10q3 5 0 10" fill="none" stroke="#fff"/>
    <path d="M112 8v13M113 8h12v8h-12z" fill="#fff" stroke="#fff"/><circle cx="122" cy="17" r="5" fill="#d42020"/><path d="M120 15l4 4M124 15l-4 4" stroke="#fff"/><path d="M140 10h10v8h-10zM142 21h8M137 7v5h3M136 7h4" fill="none" stroke="#fff" stroke-width="1"/></svg>
  <div class="clock">10:47<br>2021/9/22</div><div class="desk"></div>`);

define('genesis-desktop', `
  :host { display: flex; flex-direction: column; height: 100vh; }
  :host > * { flex: none; }
  title-bar, app-header, status-strip, task-bar { flex: none; }
  .work { display: flex; flex: 1 1 0px; min-height: 0; border-right: 8px solid #c9bfae; }
  layer-panel { width: 149px; flex: none; }
`, () => `<title-bar></title-bar><app-header></app-header>
  <div class="work"><layer-panel></layer-panel><board-canvas class="grow"></board-canvas></div>
  <status-strip></status-strip><task-bar></task-bar>
  <checklist-editor></checklist-editor><results-histogram></results-histogram><results-viewer></results-viewer>`);
</script>
</body>
</html>
